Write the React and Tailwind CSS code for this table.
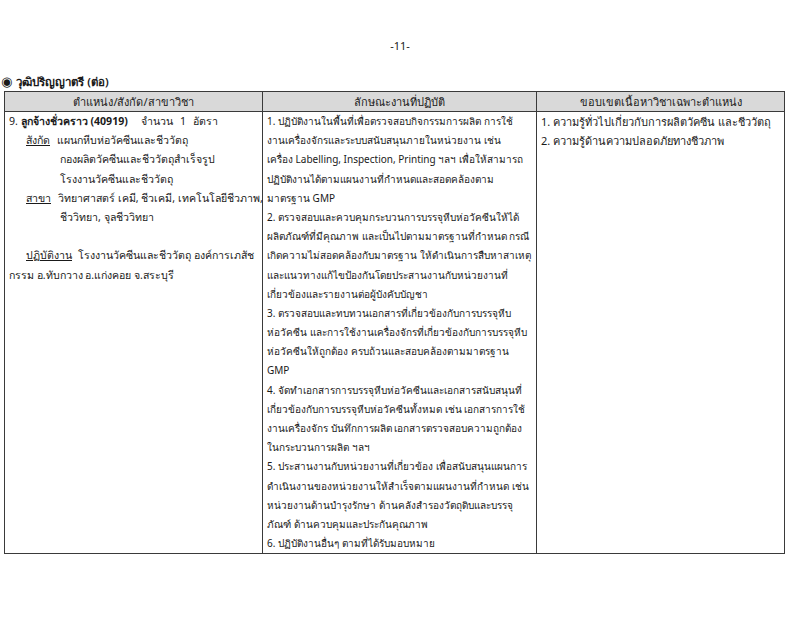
const col2 = [
  "1. ปฏิบัติงานในพื้นที่เพื่อตรวจสอบกิจกรรมการผลิต การใช้",
  "งานเครื่องจักรและระบบสนับสนุนภายในหน่วยงาน เช่น",
  "เครื่อง Labelling, Inspection, Printing ฯลฯ เพื่อให้สามารถ",
  "ปฏิบัติงานได้ตามแผนงานที่กำหนดและสอดคล้องตาม",
  "มาตรฐาน GMP",
  "2. ตรวจสอบและควบคุมกระบวนการบรรจุหีบห่อวัคซีนให้ได้",
  "ผลิตภัณฑ์ที่มีคุณภาพ และเป็นไปตามมาตรฐานที่กำหนด กรณี",
  "เกิดความไม่สอดคล้องกับมาตรฐาน ให้ดำเนินการสืบหาสาเหตุ",
  "และแนวทางแก้ไขป้องกันโดยประสานงานกับหน่วยงานที่",
  "เกี่ยวข้องและรายงานต่อผู้บังคับบัญชา",
  "3. ตรวจสอบและทบทวนเอกสารที่เกี่ยวข้องกับการบรรจุหีบ",
  "ห่อวัคซีน และการใช้งานเครื่องจักรที่เกี่ยวข้องกับการบรรจุหีบ",
  "ห่อวัคซีนให้ถูกต้อง ครบถ้วนและสอบคล้องตามมาตรฐาน",
  "GMP",
  "4. จัดทำเอกสารการบรรจุหีบห่อวัคซีนและเอกสารสนับสนุนที่",
  "เกี่ยวข้องกับการบรรจุหีบห่อวัคซีนทั้งหมด เช่น เอกสารการใช้",
  "งานเครื่องจักร บันทึกการผลิต เอกสารตรวจสอบความถูกต้อง",
  "ในกระบวนการผลิต ฯลฯ",
  "5. ประสานงานกับหน่วยงานที่เกี่ยวข้อง เพื่อสนับสนุนแผนการ",
  "ดำเนินงานของหน่วยงานให้สำเร็จตามแผนงานที่กำหนด เช่น",
  "หน่วยงานด้านบำรุงรักษา ด้านคลังสำรองวัตถุดิบและบรรจุ",
  "ภัณฑ์ ด้านควบคุมและประกันคุณภาพ",
  "6. ปฏิบัติงานอื่นๆ ตามที่ได้รับมอบหมาย",
];

const col3 = [
  "1. ความรู้ทั่วไปเกี่ยวกับการผลิตวัคซีน และชีววัตถุ",
  "2. ความรู้ด้านความปลอดภัยทางชีวภาพ",
];

function Line({ children, className = "" }) {
  return <div className={"h-[19.2px] whitespace-nowrap " + className}>{children}</div>;
}

export default function App() {
  return (
    <div
      className="w-[800px] h-[630px] bg-white text-[#1a1a1a] overflow-hidden"
      style={{ fontFamily: '"Noto Sans", "DejaVu Sans", sans-serif' }}
    >
      <div className="pt-[38px] h-[54px] text-center text-[11px] leading-[16px]">-11-</div>

      <div className="mt-[18px] h-[19px] flex items-center gap-[4px] pl-[1px] text-[11.5px] leading-[19px] font-semibold">
        <span className="text-[13px] leading-[19px]">◉</span>
        <span>วุฒิปริญญาตรี (ต่อ)</span>
      </div>

      <div className="ml-[4px] w-[781px] border border-[#3a3a3a] text-[11px] leading-[19.2px]">
        {/* header */}
        <div className="grid grid-cols-[258px_274px_247px] bg-[#d9d9d9] border-b border-[#3a3a3a] h-[20px]">
          <div className="text-center border-r border-[#3a3a3a]">ตำแหน่ง/สังกัด/สาขาวิชา</div>
          <div className="text-center border-r border-[#3a3a3a]">ลักษณะงานที่ปฏิบัติ</div>
          <div className="text-center">ขอบเขตเนื้อหาวิชาเฉพาะตำแหน่ง</div>
        </div>

        <div className="grid grid-cols-[258px_274px_247px]">
          <div className="border-r border-[#3a3a3a] pl-[4px] text-[10.6px]">
            <Line>
              9. <span className="font-bold">ลูกจ้างชั่วคราว (40919)</span>
              <span className="ml-[13px]">จำนวน</span>
              <span className="ml-[7px]">1</span>
              <span className="ml-[7px]">อัตรา</span>
            </Line>
            <Line className="pl-[17px]">
              <span className="underline">สังกัด</span>
              <span className="ml-[7px]">แผนกหีบห่อวัคซีนและชีววัตถุ</span>
            </Line>
            <Line className="pl-[51px]">กองผลิตวัคซีนและชีววัตถุสำเร็จรูป</Line>
            <Line className="pl-[51px]">โรงงานวัคซีนและชีววัตถุ</Line>
            <Line className="pl-[17px]">
              <span className="underline">สาขา</span>
              <span className="ml-[7px]">วิทยาศาสตร์ เคมี, ชีวเคมี, เทคโนโลยีชีวภาพ,</span>
            </Line>
            <Line className="pl-[51px]">ชีววิทยา, จุลชีววิทยา</Line>
            <Line />
            <Line className="pl-[17px]">
              <span className="underline">ปฏิบัติงาน</span>
              <span className="ml-[6px]">โรงงานวัคซีนและชีววัตถุ องค์การเภสัช</span>
            </Line>
            <Line>กรรม อ.ทับกวาง อ.แก่งคอย จ.สระบุรี</Line>
          </div>

          <div className="border-r border-[#3a3a3a] pl-[4px] text-[10px]">
            {col2.map((t, i) => (
              <Line key={i}>{t}</Line>
            ))}
          </div>

          <div className="pl-[4px]">
            {col3.map((t, i) => (
              <Line key={i}>{t}</Line>
            ))}
          </div>
        </div>
      </div>
    </div>
  );
}
